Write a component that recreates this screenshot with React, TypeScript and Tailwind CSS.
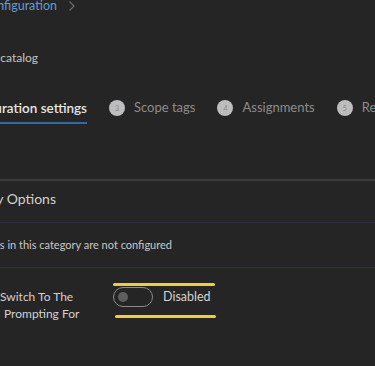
import React from 'react';

const steps = [
  { n: 3, label: 'Scope tags' },
  { n: 4, label: 'Assignments' },
  { n: 5, label: 'Review + create' },
];

// text whose left side runs off the edge of the screenshot: right-align it in a clipped box
function Clipped({ width, children, className = '' }: { width: number; children: React.ReactNode; className?: string }) {
  return (
    <div className={`flex justify-end overflow-hidden whitespace-nowrap shrink-0 ${className}`} style={{ width }}>
      {children}
    </div>
  );
}

export default function App() {
  return (
    <div
      className="w-[375px] h-[366px] overflow-hidden bg-[#252525] text-[#d4d4d4]"
      style={{ fontFamily: 'Lato, "Open Sans", sans-serif' }}
    >
      {/* breadcrumb */}
      <div className="flex items-center h-[14px] -mt-[1px]">
        <Clipped width={57}>
          <span className="text-[12.5px] leading-[14px] text-[#5f9fd6]">Configuration</span>
        </Clipped>
        <svg width="8" height="12" viewBox="0 0 8 12" className="ml-[11px]">
          <path d="M1.5 1.5 L6 6 L1.5 10.5" fill="none" stroke="#6b6b6b" strokeWidth="1.2" />
        </svg>
      </div>

      {/* title */}
      <div className="mt-[37px] flex h-[16px] items-center">
        <Clipped width={38}>
          <span className="text-[12px] text-[#c4c4c4]">Settings catalog</span>
        </Clipped>
      </div>

      {/* wizard tabs */}
      <div className="mt-[33px] flex items-start">
        <div className="flex flex-col">
          <Clipped width={87} className="h-[18px] items-center">
            <span className="text-[13.5px] font-semibold text-[#e6e6e6]">Basics Configuration settings</span>
          </Clipped>
          <div className="mt-[5px] h-[2px] w-[87px] bg-[#35699b]" />
        </div>
        {steps.map((s) => (
          <div key={s.n} className="ml-[22px] flex h-[18px] items-center shrink-0 whitespace-nowrap">
            <span className="flex h-[16px] w-[16px] items-center justify-center rounded-full bg-[#bdbdbd] text-[7px] text-[#8a8a8a]">
              {s.n}
            </span>
            <span className="ml-[9px] text-[13px] text-[#8c8c8c]">{s.label}</span>
          </div>
        ))}
      </div>

      {/* category */}
      <div className="mt-[55px] h-[2px] bg-[#3b3b3b]" />
      <div className="flex h-[41px] items-center pb-[6px]">
        <Clipped width={56}>
          <span className="text-[14px] text-[#d2d2d2]">Privacy Options</span>
        </Clipped>
      </div>
      <div className="h-[1px] bg-[#283046]" />
      <div className="flex h-[44px] items-center">
        <Clipped width={172}>
          <span className="text-[11px] text-[#c8c8c8]">All settings in this category are not configured</span>
        </Clipped>
      </div>
      <div className="h-[1px] bg-[#283046]" />

      {/* setting row */}
      <div className="mt-[15px] flex items-start">
        <div className="mt-[5px] w-[113px] shrink-0 text-[12px] leading-[17px] text-[#d2d2d2]">
          <div>Switch To The</div>
          <div className="pl-[4px]">Prompting For</div>
        </div>
        <div className="flex flex-col">
          <div className="h-[3px] w-[102px] rounded-full bg-[#f3cb3c]" />
          <div className="mt-[1px] flex h-[20px] items-center">
            <div className="flex h-[20px] w-[40px] items-center rounded-full border border-[#8a8a8a] pl-[4px]">
              <div className="h-[10px] w-[10px] rounded-full bg-[#5e5e5e]" />
            </div>
            <span className="ml-[10px] text-[12.5px] text-[#d2d2d2]">Disabled</span>
          </div>
          <div className="ml-[2px] mt-[8px] h-[3px] w-[101px] rounded-full bg-[#f3cb3c]" />
        </div>
      </div>
    </div>
  );
}
